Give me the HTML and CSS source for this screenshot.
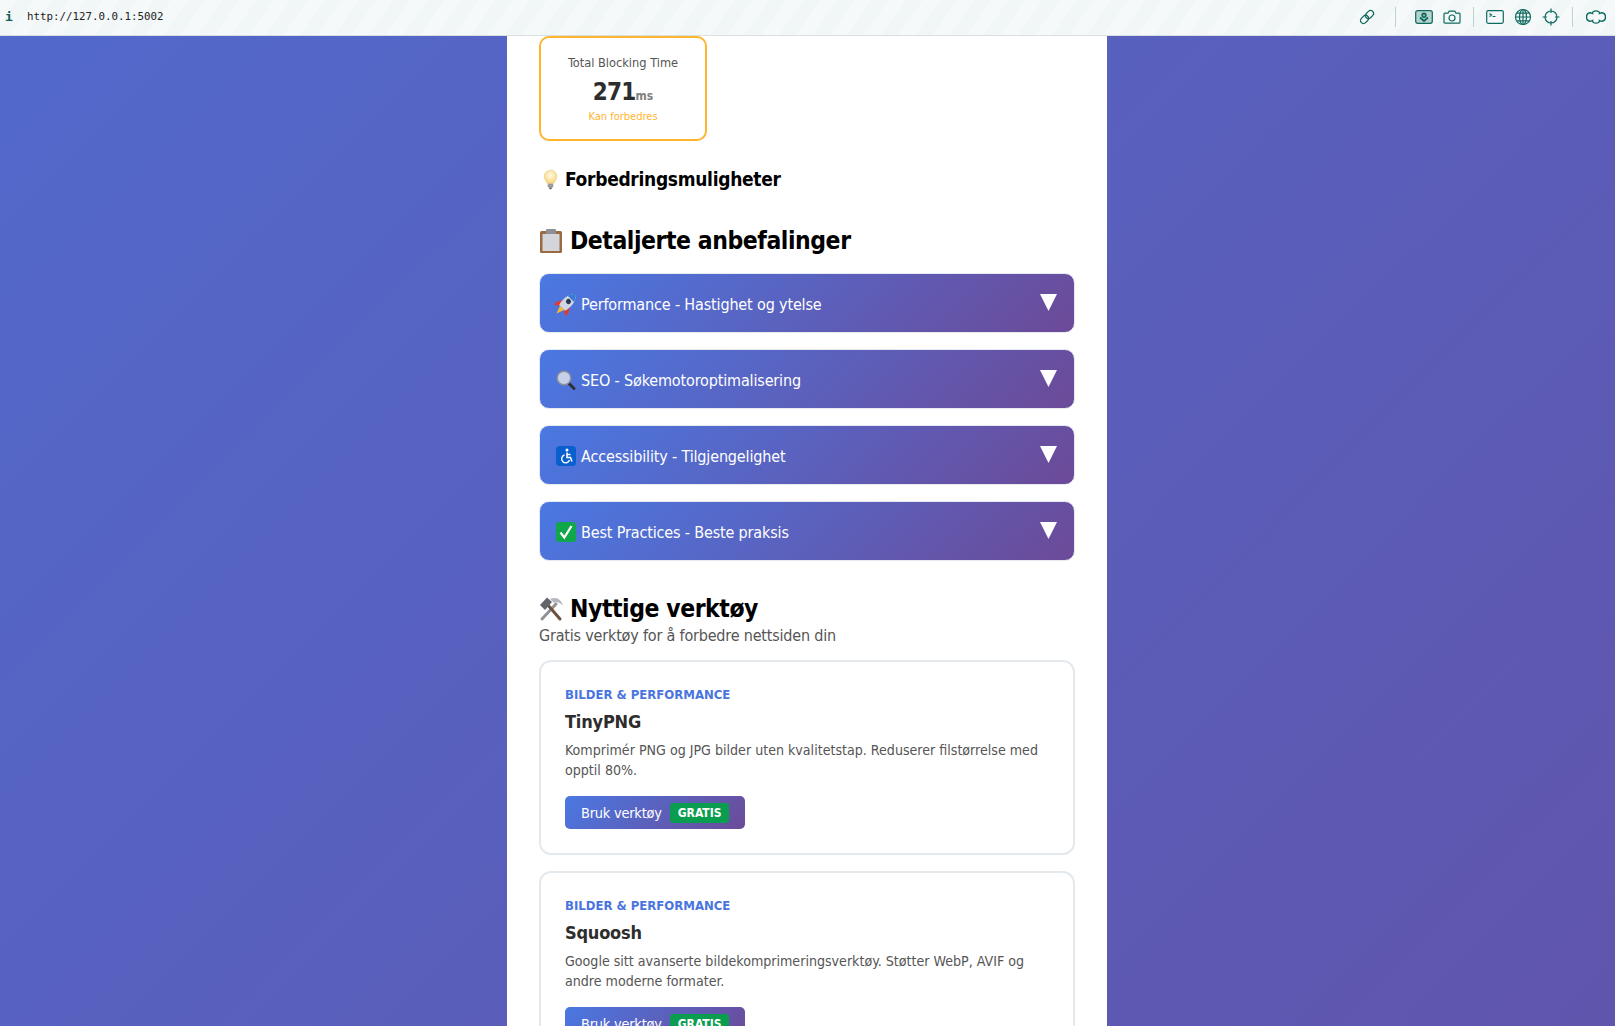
FILE: index.html
```html
<!DOCTYPE html>
<html lang="no">
<head>
<meta charset="utf-8">
<title>Nettsideanalyse</title>
<link rel="stylesheet" href="styles.css">
</head>
<body>
<header class="toolbar">
  <div class="address"><span class="info">i</span><span class="url">http://127.0.0.1:5002</span></div>
  <div class="tools">
    <svg class="tool" viewBox="0 0 18 18"><g transform="rotate(-45 9 9)"><rect x="1" y="6" width="9" height="6" rx="3"/><rect x="8" y="6" width="9" height="6" rx="3"/></g></svg>
    <span class="sep sep-a"></span>
    <svg class="tool tool-wide" viewBox="0 0 18 14"><rect x=".7" y=".7" width="16.600" height="12.600" rx="2" class="fill-soft"/><path d="M9 3.500a1.800 1.800 0 1 1 0 3.600 1.800 1.800 0 0 1 0-3.600zM5 7.500l4 3.500 4-3.500" class="thick"/></svg>
    <svg class="tool tool-wide" viewBox="0 0 18 14"><path d="M1 4.200q0-1 1-1h3l1.200-2h5.600l1.200 2h3q1 0 1 1v8q0 1-1 1H2q-1 0-1-1z"/><circle cx="9" cy="8" r="3"/></svg>
    <span class="sep sep-b"></span>
    <svg class="tool tool-wide" viewBox="0 0 18 14"><rect x=".7" y=".7" width="16.600" height="12.600" rx="1.500"/><path d="M3.500 3.500l2 1.500-2 1.500M6.500 6.500h3"/></svg>
    <svg class="tool" viewBox="0 0 18 18"><circle cx="9" cy="9" r="7.500"/><ellipse cx="9" cy="9" rx="3.500" ry="7.500"/><path d="M1.500 9h15M2.500 5.200h13M2.500 12.800h13M9 1.500v15"/></svg>
    <svg class="tool" viewBox="0 0 18 18"><circle cx="9" cy="9" r="6"/><path d="M9 .5v4.500M9 13v4.500M.5 9H5M13 9h4.500"/></svg>
    <span class="sep sep-c"></span>
    <svg class="tool tool-puzzle" viewBox="0 0 20 16"><path d="M6.500 4.500C6 1 14 1 13.500 4.500C17 2.500 19.500 5 19.500 8C19.500 11 17 13.500 13.500 11.500C14 15 6 15 6.500 11.500C3 13.500 .5 11 .5 8C.5 5 3 2.500 6.500 4.500z"/></svg>
  </div>
</header>

<div class="stage">
  <main class="sheet">
    <section class="metric">
      <div class="metric-title">Total Blocking Time</div>
      <div class="metric-value">271<span class="metric-unit">ms</span></div>
      <div class="metric-status">Kan forbedres</div>
    </section>

    <h3 class="improve">
      <svg class="emoji emoji-bulb" viewBox="0 0 16 22"><defs><radialGradient id="bulb" cx=".5" cy=".4" r=".6"><stop offset="0" stop-color="#fffbe8"/><stop offset="1" stop-color="#f7d57c"/></radialGradient></defs><path d="M8 1a6.800 6.800 0 0 1 6.800 6.800c0 3-2.300 4.300-3 7.200H4.200c-.7-2.900-3-4.200-3-7.200A6.800 6.800 0 0 1 8 1z" fill="url(#bulb)" stroke="#e7c878" stroke-width=".6"/><rect x="5" y="15.300" width="6" height="4.200" rx="1" fill="#9b9b9b"/><path d="M6.300 19.500h3.400L8.800 21.300H7.200z" fill="#5e5e5e"/></svg>
      Forbedringsmuligheter
    </h3>

    <h2 class="section-title">
      <svg class="emoji emoji-head" viewBox="0 0 24 26"><rect x="1" y="3" width="22" height="22" rx="1.500" fill="#9a6a42"/><rect x="3.500" y="6" width="17" height="17" fill="#d3d5da"/><rect x="7" y="1" width="10" height="5" rx="1" fill="#8d8f94"/></svg>
      Detaljerte anbefalinger
    </h2>

    <div class="accordion">
      <button class="acc-row">
        <svg class="emoji emoji-row" viewBox="0 0 20 20"><g transform="rotate(45 10 10)"><path d="M5.500 9 1.500 15.500 2 19 6.800 15.500z" fill="#e0392b"/><path d="M14.500 9 18.500 15.500 18 19 13.200 15.500z" fill="#e0392b"/><path d="M7 15.500h6L10 23.500z" fill="#f7b733"/><path d="M10-4C15.500 1 16 9 14.200 15.500H5.800C4 9 4.500 1 10-4z" fill="#cfd6e4"/><path d="M10-4C12-2 13.500.2 14.300 3H5.700C6.500.2 8-2 10-4z" fill="#3a7bd5"/><circle cx="10" cy="6.500" r="2.600" fill="#2a3550"/></g></svg>
        <span class="acc-label">Performance - Hastighet og ytelse</span>
        <span class="acc-arrow"></span>
      </button>
      <button class="acc-row">
        <svg class="emoji emoji-row" viewBox="0 0 20 20"><path d="M12 12.500l6 6" stroke="#2e2e33" stroke-width="3" stroke-linecap="round"/><circle cx="8" cy="8" r="6.800" fill="#c6d0ea" stroke="#8e9099" stroke-width="1.500"/></svg>
        <span class="acc-label">SEO - Søkemotoroptimalisering</span>
        <span class="acc-arrow"></span>
      </button>
      <button class="acc-row">
        <svg class="emoji emoji-row" viewBox="0 0 20 20"><rect x="0" y="0" width="20" height="20" rx="3.500" fill="#0a5fcf"/><circle cx="11" cy="4" r="1.500" fill="#fff"/><path d="M11 6.500v5h3.500l1.500 4M11 8.500h3.500" fill="none" stroke="#fff" stroke-width="1.500"/><path d="M8.500 9a4 4 0 1 0 5 5" fill="none" stroke="#fff" stroke-width="1.400"/></svg>
        <span class="acc-label">Accessibility - Tilgjengelighet</span>
        <span class="acc-arrow"></span>
      </button>
      <button class="acc-row">
        <svg class="emoji emoji-row" viewBox="0 0 20 20"><rect x="0" y="0" width="20" height="20" rx="3.500" fill="#10a64a"/><path d="M4.500 10.500l3.800 5L15.500 4" fill="none" stroke="#fff" stroke-width="2.200"/></svg>
        <span class="acc-label">Best Practices - Beste praksis</span>
        <span class="acc-arrow"></span>
      </button>
    </div>

    <h2 class="section-title tools-title">
      <svg class="emoji emoji-head" viewBox="0 0 24 24"><path d="M3 22 17 7" stroke="#8f9398" stroke-width="3" stroke-linecap="round"/><path d="M21 22 8 7" stroke="#6d5140" stroke-width="3" stroke-linecap="round"/><path d="M1 8 8 .5 13 5 6 13z" fill="#62666c"/><path d="M11 2C17-.5 22 1.500 24 9 21 5.500 18 4.500 15 6z" fill="#b5b9bf"/></svg>
      Nyttige verktøy
    </h2>
    <p class="section-sub">Gratis verktøy for å forbedre nettsiden din</p>

    <article class="tool-card">
      <div class="tool-cat">BILDER &amp; PERFORMANCE</div>
      <h4 class="tool-name">TinyPNG</h4>
      <p class="tool-desc">Komprimér PNG og JPG bilder uten kvalitetstap. Reduserer filstørrelse med opptil 80%.</p>
      <a class="tool-btn">Bruk verktøy <span class="badge">GRATIS</span></a>
    </article>

    <article class="tool-card">
      <div class="tool-cat">BILDER &amp; PERFORMANCE</div>
      <h4 class="tool-name">Squoosh</h4>
      <p class="tool-desc">Google sitt avanserte bildekomprimeringsverktøy. Støtter WebP, AVIF og andre moderne formater.</p>
      <a class="tool-btn">Bruk verktøy <span class="badge">GRATIS</span></a>
    </article>
  </main>
</div>
</body>
</html>
```
FILE: styles.css
```css
* { box-sizing: border-box; }
html, body { margin: 0; height: 100%; overflow: hidden; }
body {
  font-family: "DejaVu Sans", sans-serif;
  font-stretch: condensed;
  display: flex;
  flex-direction: column;
  background: #5565c5;
}
.toolbar {
  flex: 0 0 36px;
  height: 36px;
  display: flex;
  align-items: center;
  justify-content: space-between;
  padding-bottom: 2px;
  background: repeating-linear-gradient(125deg, #f5f9f9 0 14px, #f1f6f6 14px 28px);
  border-bottom: 1px solid #d9dfe3;
}
.address { display: flex; align-items: center; padding-left: 5px; }
.info { font: bold 13px "DejaVu Sans Mono", monospace; color: #0f5f55; width: 22px; }
.url { font: 10.800px "DejaVu Sans Mono", monospace; color: #222; }
.tools { display: flex; align-items: center; padding-right: 9px; }
.tool { width: 18px; height: 18px; fill: none; stroke: #0f6a5f; stroke-width: 1.200; margin-left: 10px; }
.tool-wide { height: 14px; }
.tool-puzzle { width: 20px; height: 16px; margin-left: 13px; stroke-width: 1.400; }
.fill-soft { fill: #b6d3ce; }
.thick { stroke-width: 1.800; }
.sep { width: 1px; height: 20px; background: #bcd3cf; }
.sep-a { margin-left: 19px; margin-right: 9px; }
.sep-b { margin-left: 12px; margin-right: 2px; }
.sep-c { margin-left: 12px; }

.stage {
  flex: 1;
  min-height: 0;
  overflow: hidden;
  display: flex;
  justify-content: center;
  background: linear-gradient(135deg, #5269cb 0%, #6055ad 100%);
}
.sheet {
  width: 600px;
  background: #fff;
  padding: 0 32px;
  margin-left: -1px;
  flex: none;
}
.metric {
  width: 168px;
  height: 105px;
  border: 2px solid #ffb52e;
  border-radius: 10px;
  text-align: center;
  padding-top: 15px;
}
.metric-title { font-size: 12.700px; line-height: 20px; color: #555; }
.metric-value { font-size: 24px; line-height: 30px; font-weight: 700; letter-spacing: -.8px; color: #2d2d2d; margin-top: 4px; }
.metric-unit { font-size: 12px; letter-spacing: 0; color: #808080; }
.metric-status { font-size: 11px; line-height: 16px; color: #ffb52e; margin-top: -2px; }

.emoji { flex: none; overflow: visible; }
.improve {
  display: flex;
  align-items: center;
  gap: 7px;
  margin: 25px 0 0;
  padding-left: 4px;
  font-size: 19px;
  letter-spacing: -.3px;
  line-height: 26px;
  font-weight: 700;
  color: #000;
}
.emoji-bulb { width: 15px; height: 21px; }
.section-title {
  display: flex;
  align-items: center;
  gap: 7px;
  margin: 33px 0 0;
  font-size: 24.500px;
  letter-spacing: -.45px;
  line-height: 32px;
  font-weight: 700;
  color: #000;
}
.emoji-head { width: 24px; height: 26px; }
.accordion { display: flex; flex-direction: column; gap: 16px; margin-top: 16px; }
.acc-row {
  display: flex;
  align-items: center;
  gap: 5px;
  width: 536px;
  height: 60px;
  padding: 2px 17px 0 16px;
  border: 1px solid #e5e9f0;
  border-radius: 10px;
  background: linear-gradient(135deg, #4a78e2 0%, #6c4a98 100%);
  color: #fff;
  font: inherit;
  font-stretch: condensed;
  font-size: 16px;
  letter-spacing: -.15px;
  text-align: left;
}
.emoji-row { width: 20px; height: 20px; }
.acc-label { flex: 1; }
.acc-arrow {
  width: 17px;
  height: 17px;
  background: #fff;
  clip-path: polygon(0 0, 100% 0, 50% 100%);
  margin-top: -3px;
}
.tools-title { margin-top: 32px; }
.section-sub { margin: 0; font-size: 16px; letter-spacing: -.19px; line-height: 22px; color: #555; }
.tool-card {
  width: 536px;
  margin-top: 13px;
  margin-bottom: 16px;
  padding: 25px 24px 24px;
  border: 2px solid #e4e9ee;
  border-radius: 12px;
}
.tool-cat { font-size: 13px; line-height: 16px; font-weight: 700; color: #4a74e0; }
.tool-name { margin: 7px 0 0; font-size: 18px; letter-spacing: -.2px; line-height: 24px; font-weight: 700; color: #2d2d2d; }
.tool-desc { margin: 6px 0 0; font-size: 14.100px; line-height: 20px; color: #555; }
.tool-btn {
  display: inline-flex;
  align-items: center;
  gap: 8px;
  height: 33px;
  margin-top: 16px;
  padding: 0 16px;
  border-radius: 5px;
  background: linear-gradient(135deg, #4a78e2 0%, #6c4a98 100%);
  color: #fff;
  font-size: 14.400px;
  letter-spacing: -.2px;
}
.badge {
  display: inline-block;
  padding: 0 8px;
  height: 20px;
  line-height: 20px;
  border-radius: 3px;
  background: #0a9d4f;
  font-size: 12px;
  letter-spacing: 0;
  font-weight: 700;
}
```
